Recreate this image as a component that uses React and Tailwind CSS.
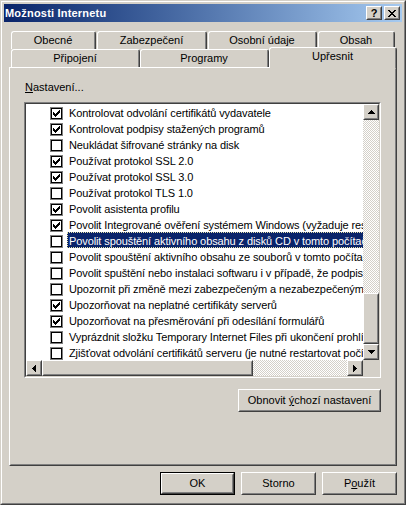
const items = [
  [true, "Kontrolovat odvolání certifikátů vydavatele"],
  [true, "Kontrolovat podpisy stažených programů"],
  [false, "Neukládat šifrované stránky na disk"],
  [true, "Používat protokol SSL 2.0"],
  [true, "Používat protokol SSL 3.0"],
  [false, "Používat protokol TLS 1.0"],
  [true, "Povolit asistenta profilu"],
  [true, "Povolit Integrované ověření systémem Windows (vyžaduje restartování)"],
  [false, "Povolit spouštění aktivního obsahu z disků CD v tomto počítači"],
  [false, "Povolit spouštění aktivního obsahu ze souborů v tomto počítači"],
  [false, "Povolit spuštění nebo instalaci softwaru i v případě, že podpis je neplatný"],
  [false, "Upozornit při změně mezi zabezpečeným a nezabezpečeným režimem"],
  [true, "Upozorňovat na neplatné certifikáty serverů"],
  [true, "Upozorňovat na přesměrování při odesílání formulářů"],
  [false, "Vyprázdnit složku Temporary Internet Files při ukončení prohlížeče"],
  [false, "Zjišťovat odvolání certifikátů serveru (je nutné restartovat počítač)"],
];

// classic checkmark, columns x with 3px tall runs starting at y
const CHECK = [[1, 3], [2, 4], [3, 5], [4, 4], [5, 3], [6, 2], [7, 1]];
const CLOSE = [
  [0, 0, 2], [6, 0, 2], [1, 1, 2], [5, 1, 2], [2, 2, 2], [4, 2, 2], [3, 3, 2],
  [2, 4, 2], [4, 4, 2], [1, 5, 2], [5, 5, 2], [0, 6, 2], [6, 6, 2],
];

const Raised = ({ className = "", children }) => (
  <div className={"box-border border border-t-white border-l-white border-r-[#404040] border-b-[#404040] bg-[#d4d0c8] " + className}>
    <div className="box-border w-full h-full border border-t-[#d4d0c8] border-l-[#d4d0c8] border-r-[#808080] border-b-[#808080] flex items-center justify-center">
      {children}
    </div>
  </div>
);

const Arrow = ({ dir }) => {
  const rows = [[3, 1], [2, 3], [1, 5], [0, 7]];
  if (dir === "up" || dir === "down") {
    return (
      <svg width="7" height="4" viewBox="0 0 7 4" shapeRendering="crispEdges">
        {rows.map(([x, w], i) => (
          <rect key={i} x={x} y={dir === "up" ? i : 3 - i} width={w} height="1" fill="#000" />
        ))}
      </svg>
    );
  }
  return (
    <svg width="4" height="7" viewBox="0 0 4 7" shapeRendering="crispEdges">
      {rows.map(([y, h], i) => (
        <rect key={i} x={dir === "left" ? i : 3 - i} y={y} width="1" height={h} fill="#000" />
      ))}
    </svg>
  );
};

const Checkbox = ({ checked }) => (
  <div className="box-border w-[13px] h-[13px] shrink-0 border border-[#808080]">
    <div className="box-border w-full h-full border border-black bg-white">
      {checked && (
        <svg width="9" height="9" viewBox="0 0 9 9" shapeRendering="crispEdges" className="block">
          {CHECK.map(([x, y]) => (
            <rect key={x} x={x} y={y} width="1" height="3" fill="#000" />
          ))}
        </svg>
      )}
    </div>
  </div>
);

const Tab = ({ className = "", children }) => (
  <div className={"box-border h-[18px] border-t border-l border-r border-t-white border-l-white border-r-[#404040] rounded-t-[3px] bg-[#d4d0c8] " + className}>
    <div className="box-border h-full border-r border-r-[#808080] text-center pt-[1px] leading-[14px]">{children}</div>
  </div>
);

const Checker = ({ className = "" }) => (
  <div className={"bg-[image:repeating-conic-gradient(#d4d0c8_0%_25%,#ffffff_0%_50%)] bg-[length:2px_2px] " + className} />
);

export default function App() {
  return (
    <div className="w-[406px] h-[505px] box-border border border-t-[#d4d0c8] border-l-[#d4d0c8] border-r-[#404040] border-b-[#404040] bg-[#d4d0c8] font-['Liberation_Sans',Arial,sans-serif] text-[11px] text-black">
      <div className="box-border h-full border border-t-white border-l-white border-r-[#808080] border-b-[#808080] p-[2px]">
        {/* title bar */}
        <div className="h-[18px] flex items-center bg-linear-to-r from-[#0a246a] to-[#a6caf0] pl-[1px] pr-[2px]">
          <span className="flex-1 text-white font-bold text-[11px] tracking-[0.2px] leading-[18px]">Možnosti Internetu</span>
          <div className="flex gap-[2px]">
            <Raised className="w-[16px] h-[14px]">
              <span className="font-bold text-[11px] leading-[10px]">?</span>
            </Raised>
            <Raised className="w-[16px] h-[14px]">
              <svg width="8" height="7" viewBox="0 0 8 7" shapeRendering="crispEdges">
                {CLOSE.map(([x, y, w], i) => (
                  <rect key={i} x={x} y={y} width={w} height="1" fill="#000" />
                ))}
              </svg>
            </Raised>
          </div>
        </div>

        {/* tab control */}
        <div className="ml-[5px] mt-[9px] w-[388px]">
          <div className="flex gap-px pl-[2px]">
            <Tab className="w-[85px]">Obecné</Tab>
            <Tab className="w-[110px]">Zabezpečení</Tab>
            <Tab className="w-[109px]">Osobní údaje</Tab>
            <Tab className="w-[77px]">Obsah</Tab>
          </div>
          <div className="flex items-end h-[18px] pl-[2px]">
            <Tab className="w-[129px]">Připojení</Tab>
            <Tab className="w-[129px]">Programy</Tab>
            <div className="relative z-10 box-border w-[128px] h-[21px] mb-[-1px] border-t border-l border-r border-t-white border-l-white border-r-[#404040] rounded-t-[3px] bg-[#d4d0c8]">
              <div className="box-border h-full border-r border-r-[#808080] text-center pt-[1px] leading-[14px]">Upřesnit</div>
            </div>
          </div>

          {/* panel */}
          <div className="box-border h-[399px] border border-t-white border-l-white border-r-[#404040] border-b-[#404040]">
            <div className="box-border h-full border border-t-[#d4d0c8] border-l-[#d4d0c8] border-r-[#808080] border-b-[#808080]">
              <div className="ml-[14px] mt-[12px] leading-[13px]">
                <span className="underline">N</span>astavení...
              </div>
              <div className="ml-[13px] mt-[8px] box-border w-[357px] h-[276px] border border-t-[#808080] border-l-[#808080] border-r-white border-b-white">
                <div className="box-border h-full border border-t-[#404040] border-l-[#404040] border-r-[#d4d0c8] border-b-[#d4d0c8] bg-white grid grid-cols-[337px_16px] grid-rows-[256px_16px]">
                  <div className="overflow-hidden tracking-[-0.1px]">
                    {items.map(([checked, text], i) => {
                      const sel = i === 8;
                      return (
                        <div key={i} className="flex h-[16px] whitespace-nowrap">
                          <div className="ml-[24px] mt-[3px]">
                            <Checkbox checked={checked} />
                          </div>
                          <div
                            className={
                              "ml-[4px] box-border h-[16px] border pl-px pr-[2px] pt-[2px] leading-[12px] " +
                              (sel ? "bg-[#0a246a] text-white border-dotted border-[#e6e2a8]" : "border-transparent")
                            }
                          >
                            {text}
                          </div>
                        </div>
                      );
                    })}
                  </div>
                  <div className="flex flex-col">
                    <Raised className="w-[16px] h-[16px] shrink-0"><Arrow dir="up" /></Raised>
                    <Checker className="flex-1" />
                    <Raised className="w-[16px] h-[51px] shrink-0" />
                    <Raised className="w-[16px] h-[16px] shrink-0"><Arrow dir="down" /></Raised>
                  </div>
                  <div className="flex">
                    <Raised className="w-[16px] h-[16px] shrink-0"><Arrow dir="left" /></Raised>
                    <Raised className="w-[211px] h-[16px] shrink-0" />
                    <Checker className="flex-1" />
                    <Raised className="w-[16px] h-[16px] shrink-0"><Arrow dir="right" /></Raised>
                  </div>
                  <div className="bg-[#d4d0c8]" />
                </div>
              </div>
              <div className="flex justify-end mr-[14px] mt-[11px]">
                <Raised className="w-[143px] h-[23px]">
                  <span>Obnovit <span className="underline">ý</span>chozí nastavení</span>
                </Raised>
              </div>
            </div>
          </div>

          {/* dialog buttons */}
          <div className="flex justify-end gap-[6px] mt-[6px]">
            <div className="box-border w-[75px] h-[23px] border border-black">
              <Raised className="w-full h-full">OK</Raised>
            </div>
            <Raised className="w-[75px] h-[23px]">Storno</Raised>
            <Raised className="w-[75px] h-[23px]">
              <span>P<span className="underline">o</span>užít</span>
            </Raised>
          </div>
        </div>
      </div>
    </div>
  );
}
